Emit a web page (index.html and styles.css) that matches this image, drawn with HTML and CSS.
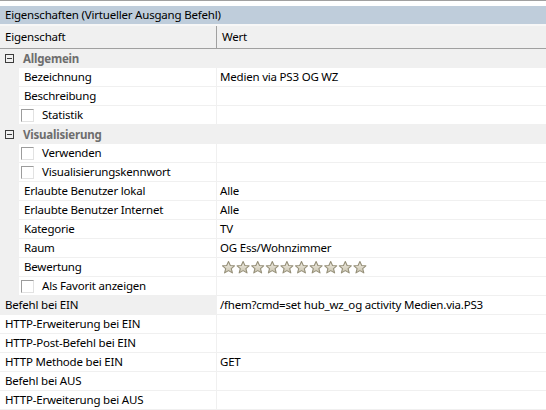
FILE: index.html
```html
<!DOCTYPE html>
<html>
<head>
<meta charset="utf-8">
<link rel="stylesheet" href="styles.css">
</head>
<body>
<div class="panel">
  <div class="topline"></div>
  <div class="title">Eigenschaften (Virtueller Ausgang Befehl)</div>
  <div class="gap"></div>
  <div class="head">
    <div class="hlabel">Eigenschaft</div>
    <div class="hvalue">Wert</div>
  </div>

  <div class="cat"><span class="minus"></span><span class="cname">Allgemein</span></div>
  <div class="row"><div class="gutter"></div><div class="label sub">Bezeichnung</div><div class="value">Medien via PS3 OG WZ</div></div>
  <div class="row"><div class="gutter"></div><div class="label sub">Beschreibung</div><div class="value"></div></div>
  <div class="row"><div class="gutter"></div><div class="label sub"><span class="check"></span>Statistik</div><div class="value"></div></div>

  <div class="cat"><span class="minus"></span><span class="cname">Visualisierung</span></div>
  <div class="row"><div class="gutter"></div><div class="label sub"><span class="check"></span>Verwenden</div><div class="value"></div></div>
  <div class="row"><div class="gutter"></div><div class="label sub"><span class="check"></span>Visualisierungskennwort</div><div class="value"></div></div>
  <div class="row"><div class="gutter"></div><div class="label sub">Erlaubte Benutzer lokal</div><div class="value">Alle</div></div>
  <div class="row"><div class="gutter"></div><div class="label sub">Erlaubte Benutzer Internet</div><div class="value">Alle</div></div>
  <div class="row"><div class="gutter"></div><div class="label sub">Kategorie</div><div class="value">TV</div></div>
  <div class="row"><div class="gutter"></div><div class="label sub">Raum</div><div class="value">OG Ess/Wohnzimmer</div></div>
  <div class="row"><div class="gutter"></div><div class="label sub">Bewertung</div><div class="value stars">
    <svg class="starsvg" width="150" height="14" viewBox="0 0 150 14">
      <defs>
        <linearGradient id="sg" x1="0" y1="0" x2="0" y2="1">
          <stop offset="0" stop-color="#f2efe6"/>
          <stop offset="1" stop-color="#c9c3ae"/>
        </linearGradient>
        <path id="st" d="M6.5 0.6 L8.3 4.5 L12.5 4.8 L9.3 7.6 L10.4 11.9 L6.5 9.6 L2.6 11.9 L3.7 7.6 L0.5 4.8 L4.7 4.5 Z" fill="url(#sg)" stroke="#958f78" stroke-width="1.1" stroke-linejoin="round"/>
      </defs>
      <use href="#st" x="0" y="1"/>
      <use href="#st" x="14.6" y="1"/>
      <use href="#st" x="29.2" y="1"/>
      <use href="#st" x="43.8" y="1"/>
      <use href="#st" x="58.4" y="1"/>
      <use href="#st" x="73" y="1"/>
      <use href="#st" x="87.6" y="1"/>
      <use href="#st" x="102.2" y="1"/>
      <use href="#st" x="116.8" y="1"/>
      <use href="#st" x="131.4" y="1"/>
    </svg>
  </div></div>
  <div class="row"><div class="gutter"></div><div class="label sub"><span class="check"></span>Als Favorit anzeigen</div><div class="value"></div></div>

  <div class="row"><div class="label top selected">Befehl bei EIN</div><div class="value">/fhem?cmd=set hub_wz_og activity Medien.via.PS3</div></div>
  <div class="row"><div class="label top">HTTP-Erweiterung bei EIN</div><div class="value"></div></div>
  <div class="row"><div class="label top">HTTP-Post-Befehl bei EIN</div><div class="value"></div></div>
  <div class="row"><div class="label top">HTTP Methode bei EIN</div><div class="value">GET</div></div>
  <div class="row"><div class="label top">Befehl bei AUS</div><div class="value"></div></div>
  <div class="row"><div class="label top">HTTP-Erweiterung bei AUS</div><div class="value"></div></div>
</div>
</body>
</html>
```
FILE: styles.css
```css
html, body {
  margin: 0;
  padding: 0;
  background: #ffffff;
}
body {
  width: 546px;
  height: 410px;
  overflow: hidden;
  font-family: "Noto Sans", "Open Sans", sans-serif;
  font-size: 11.5px;
  letter-spacing: -0.2px;
  color: #000000;
}
.panel {
  display: flex;
  flex-direction: column;
  width: 546px;
}
.topline {
  height: 1px;
  background: #a0a0a0;
  margin-bottom: 5px;
}
.title {
  height: 18px;
  line-height: 18px;
  background: #bfcddb;
  padding-left: 5px;
}
.gap {
  height: 2px;
  background: #f7f7f7;
}
.head {
  display: flex;
  height: 22px;
  background: #f0f0f0;
  border-bottom: 1px solid #a0a0a0;
}
.hlabel {
  width: 211px;
  padding-left: 5px;
  line-height: 22px;
  border-right: 1px solid #a0a0a0;
}
.hvalue {
  padding-left: 5px;
  line-height: 22px;
}
.cat {
  display: flex;
  align-items: center;
  height: 19px;
  background: #f0f0f0;
}
.minus {
  position: relative;
  width: 7px;
  height: 7px;
  border: 1px solid #3c3c3c;
  margin-left: 5px;
  margin-right: 9px;
  background: #f0f0f0;
}
.minus::after {
  content: "";
  position: absolute;
  left: 1px;
  top: 3px;
  width: 5px;
  height: 1px;
  background: #3c3c3c;
}
.cname {
  font-weight: bold;
  color: #6d6d6d;
}
.row {
  display: flex;
  height: 18px;
  border-bottom: 1px solid #f0f0f0;
  background: #ffffff;
}
.gutter {
  width: 19px;
  background: #f0f0f0;
}
.label {
  display: flex;
  align-items: center;
  line-height: 18px;
  white-space: nowrap;
  overflow: hidden;
}
.label.sub {
  width: 192px;
  padding-left: 5px;
}
.label.top {
  width: 211px;
  padding-left: 5px;
}
.label.selected {
  background: #f0f0f0;
}
.value {
  flex: 1;
  border-left: 1px solid #f0f0f0;
  padding-left: 3px;
  line-height: 18px;
  white-space: nowrap;
  overflow: hidden;
}
.stars {
  display: flex;
  align-items: center;
  padding-left: 5px;
}
.starsvg {
  display: block;
}
.check {
  width: 11px;
  height: 11px;
  border: 1px solid;
  border-color: #9c9c9c #e2e2e2 #e2e2e2 #9c9c9c;
  background: #ffffff;
  margin-left: -3px;
  margin-right: 8px;
  flex: none;
}
```
